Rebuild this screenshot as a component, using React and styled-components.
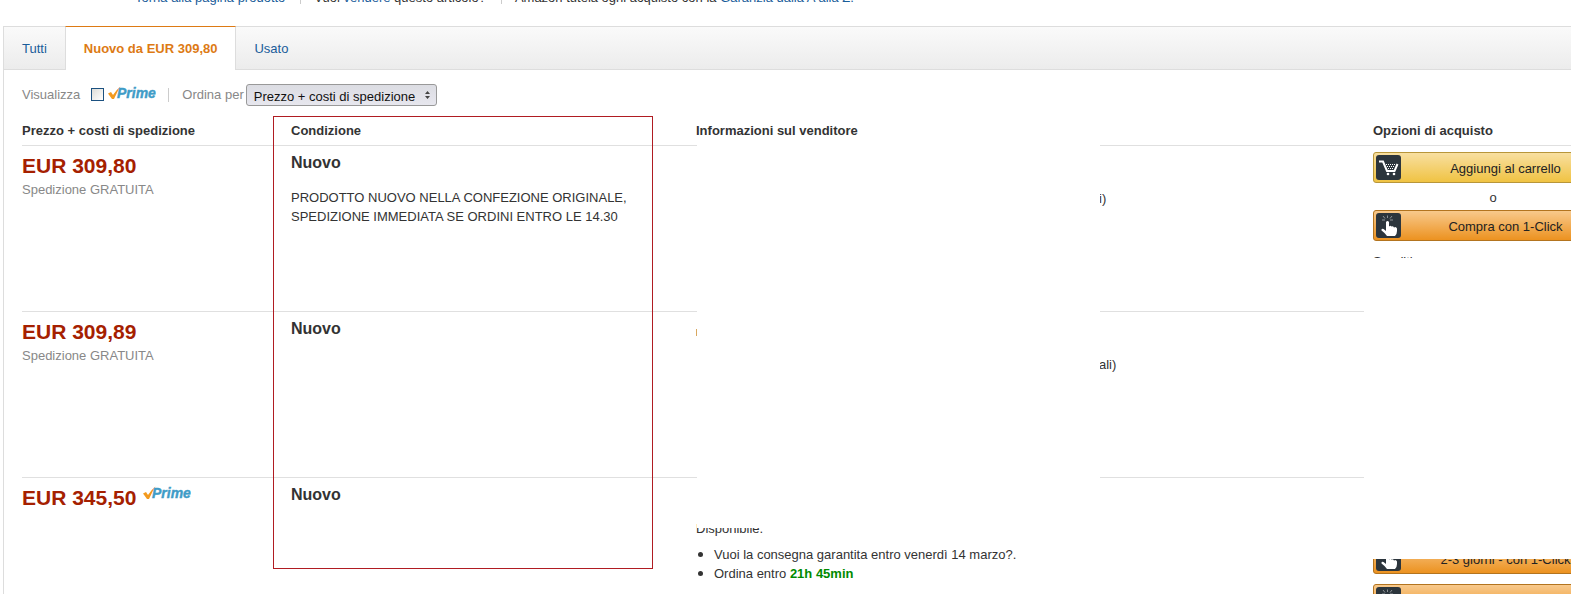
import React from 'react';
import styled, { createGlobalStyle } from 'styled-components';

const Global = createGlobalStyle`
  * { box-sizing: border-box; }
  html, body { margin: 0; padding: 0; background: #fff; }
  body {
    font: 13px/19px "Liberation Sans", Arial, sans-serif;
    color: #333;
  }
  ul { margin: 0; padding: 0; }
`;

const Page = styled.div`
  height: 100vh;
  overflow: hidden;
  display: flex;
  flex-direction: column;
`;
const Link = styled.a`
  color: #1a5d9a;
  text-decoration: none;
`;
const TopBar = styled.nav`
  flex: none;
  height: 26px;
  margin-top: -12px;
  margin-bottom: 12px;
  padding-left: 135px;
  display: flex;
  align-items: flex-start;
  white-space: nowrap;
`;
const TopItem = styled.span`
  & + & {
    border-left: 1px solid #ccc;
    height: 16px;
    margin-left: 15px;
    padding-left: 13px;
  }
`;
const Panel = styled.main`
  flex: 1;
  margin-left: 3px;
  border-left: 1px solid #ddd;
  min-width: 0;
`;
const Tabs = styled.div`
  display: flex;
  height: 44px;
  border-top: 1px solid #ddd;
  border-bottom: 1px solid #ddd;
  background: linear-gradient(#fafafa, #ececec);
`;
const Tab = styled.a`
  display: block;
  height: 44px;
  margin-top: -1px;
  padding: ${p => (p.$active ? 12 : 13)}px 18px 0;
  white-space: nowrap;
  text-decoration: none;
  color: ${p => (p.$active ? '#dd7a14' : '#1a5d9a')};
  font-weight: ${p => (p.$active ? 'bold' : 'normal')};
  background: ${p => (p.$active ? '#fff' : 'none')};
  border: solid #ddd;
  border-width: ${p => (p.$active ? '1px 1px 0' : '0')};
  border-top-color: #dd7a14;
`;
const Filters = styled.form`
  display: flex;
  align-items: center;
  height: 49px;
  padding-left: 18px;
  color: #888;
`;
const PrimeOption = styled.label`
  display: flex;
  align-items: center;
`;
const Check = styled.input`
  appearance: none;
  width: 13px;
  height: 13px;
  margin: 0 4px 0 11px;
  border: 1px solid #1c5180;
  background: linear-gradient(135deg, #dcdcd7, #fff);
`;
const PrimeLogo = styled.svg`
  flex: none;
  width: 48px;
  height: 16px;
  margin-bottom: 2px;
`;
const Divider = styled.span`
  width: 1px;
  height: 14px;
  margin: 0 13px 0 12px;
  background: #ccc;
`;
const SortLabel = styled.label`
  margin-right: 2px;
`;
const SelectWrap = styled.span`
  display: flex;
  align-items: center;
  margin-top: 1px;
`;
const SortSelect = styled.select`
  appearance: none;
  width: 191px;
  height: 22px;
  padding: 2px 7px 0;
  border: 1px solid #999;
  border-radius: 3px;
  background: linear-gradient(#dcdde3, #e7e7ee);
  color: #111;
  font: 13px "Liberation Sans", Arial, sans-serif;
`;
const SelectArrows = styled.svg`
  width: 5px;
  height: 8px;
  margin-left: -12px;
  pointer-events: none;
`;
const Offers = styled.div`
  position: relative;
  margin: 0 -42px 0 18px;
`;
const OfferTable = styled.table`
  width: 100%;
  table-layout: fixed;
  border-collapse: collapse;
`;
const Col = styled.col`
  width: ${p => p.$w}px;
`;
const HeadCell = styled.th`
  height: 26px;
  padding: 2px 0 4px;
  text-align: left;
  vertical-align: top;
  border-bottom: 1px solid #e0e0e0;
`;
const Row = styled.tr`
  height: 166px;
  border-bottom: 1px solid #e0e0e0;
`;
const Cell = styled.td`
  padding: 6px 0 0;
  vertical-align: top;
`;
const Price = styled.div`
  display: flex;
  gap: 7px;
  color: #a52000;
  font-size: 21px;
  font-weight: bold;
  line-height: 28px;

  ${PrimeLogo} {
    margin-top: 2px;
  }
`;
const Shipping = styled.div`
  color: #888;
`;
const Condition = styled.h3`
  margin: 0;
  padding-top: 1px;
  font-size: 16px;
  line-height: 20px;
`;
const Note = styled.p`
  margin: 15px 0 0;
  max-width: 360px;
`;
const Rating = styled.div`
  padding: 37px 0 0 403px;
`;
const StarRating = styled(Rating)`
  background: linear-gradient(#d9a860, #d9a860) 0 11px / 1px 7px no-repeat;
`;
const Stock = styled.div`
  padding-top: 35px;
`;
const Delivery = styled.ul`
  padding: 6px 0 0 18px;

  li {
    height: 19px;
  }

  li::marker {
    font-size: 16px;
  }
`;
const Deadline = styled.strong`
  color: #008a00;
`;
const Buy = styled.div`
  display: flex;
  flex-direction: column;
  gap: ${p => p.$gap || 0}px;
  text-align: center;
  padding-top: ${p => p.$top || 0}px;
`;
const BuyButton = styled.button`
  display: flex;
  align-items: center;
  width: 100%;
  height: 31px;
  padding: 0 2px;
  border: 1px solid ${p => (p.$orange ? '#b3741f' : '#b8963a')};
  border-radius: 3px;
  background: ${p => (p.$orange ? 'linear-gradient(#f8c98c, #ec9220)' : 'linear-gradient(#f8dfa0, #f0c343)')};
  color: #222;
  font: 13px "Liberation Sans", Arial, sans-serif;
`;
const ButtonText = styled.span`
  flex: 1;
  padding-top: 2px;
`;
const Or = styled.span`
  height: 27px;
  line-height: 29px;
`;
const Terms = styled.span`
  padding-top: 11px;
  text-align: left;
`;
const Cover = styled.div`
  position: absolute;
  background: #fff;
  left: ${p => p.$left};
  right: ${p => p.$right};
  top: ${p => p.$top}px;
  height: ${p => p.$height}px;
  width: ${p => p.$width};
`;
const Highlight = styled.div`
  position: absolute;
  left: 251px;
  top: -3px;
  width: 380px;
  height: 453px;
  border: 1px solid #b01c22;
  pointer-events: none;
`;

const Prime = () => (
  <PrimeLogo viewBox="0 0 48 16" role="img" aria-label="Prime">
    <path d="M0 7.500 L3 6 L5 9 Q8 4 12.500 0.500 Q9 6 6 13 H4 Z" fill="#f39a1f" />
    <text x="9" y="12" fontFamily="Liberation Sans" fontSize="14" fontWeight="bold" fontStyle="italic" fill="#3f9cc7" stroke="#3f9cc7" strokeWidth="0.400">Prime</text>
  </PrimeLogo>
);

const CartIcon = () => (
  <svg width="25" height="25" viewBox="0 0 25 25" aria-hidden="true">
    <rect width="25" height="25" rx="3" fill="#2c353c" />
    <path d="M3 6.500 H7 L11 16 H18.500 L21.500 9" fill="none" stroke="#fff" strokeWidth="2" />
    <path d="M10 9.500 H20 M11 11.500 H19 M12 13.500 H18" stroke="#fff" strokeWidth="1" strokeDasharray="1 1" />
    <circle cx="12" cy="19" r="1.300" fill="#fff" />
    <circle cx="18" cy="19" r="1.300" fill="#fff" />
  </svg>
);

const HandIcon = () => (
  <svg width="25" height="25" viewBox="0 0 25 25" aria-hidden="true">
    <rect width="25" height="25" rx="3" fill="#2c353c" />
    <path d="M6 7 H9 M7 3 L9 5.500 M11.500 2.500 V5 M16 3 L14 5.500 M14 7 H17" stroke="#8d9296" strokeWidth="1" />
    <path d="M10 9 Q11.500 7 13 9 V13.500 Q14.500 12 15.500 13.500 Q17 12.500 18 14.500 Q20 13 21 15.500 V18 Q21 21 19 23 H11 Q9 20 5.500 17.500 Q5 15 7.500 16 L10 18 Z" fill="#fff" />
  </svg>
);

const Action = ({ children, orange }) => (
  <BuyButton type="button" $orange={orange}>
    {orange ? <HandIcon /> : <CartIcon />}
    <ButtonText>{children}</ButtonText>
  </BuyButton>
);

export default function App() {
  return (
    <Page>
      <Global />
      <TopBar>
        <TopItem><Link href="#prodotto">Torna alla pagina prodotto</Link></TopItem>
        <TopItem>Vuoi <Link href="#vendere">vendere</Link> questo articolo?</TopItem>
        <TopItem>Amazon tutela ogni acquisto con la <Link href="#garanzia">Garanzia dalla A alla Z.</Link></TopItem>
      </TopBar>
      <Panel>
        <Tabs>
          <Tab href="#tutti">Tutti</Tab>
          <Tab href="#nuovo" $active>Nuovo da EUR 309,80</Tab>
          <Tab href="#usato">Usato</Tab>
        </Tabs>
        <Filters>
          <span>Visualizza</span>
          <PrimeOption><Check type="checkbox" /><Prime /></PrimeOption>
          <Divider />
          <SortLabel htmlFor="ordina">Ordina per</SortLabel>
          <SelectWrap>
            <SortSelect id="ordina"><option>Prezzo + costi di spedizione</option></SortSelect>
            <SelectArrows viewBox="0 0 5 8" aria-hidden="true"><path d="M0 3 L2.500 0 L5 3 Z M0 5 L2.500 8 L5 5 Z" fill="#444" /></SelectArrows>
          </SelectWrap>
        </Filters>
        <Offers>
          <OfferTable>
            <colgroup><Col $w={269} /><Col $w={405} /><col /><Col $w={240} /></colgroup>
            <thead>
              <tr>
                <HeadCell>Prezzo + costi di spedizione</HeadCell>
                <HeadCell>Condizione</HeadCell>
                <HeadCell>Informazioni sul venditore</HeadCell>
                <HeadCell>Opzioni di acquisto</HeadCell>
              </tr>
            </thead>
            <tbody>
              <Row>
                <Cell><Price>EUR 309,80</Price><Shipping>Spedizione GRATUITA</Shipping></Cell>
                <Cell>
                  <Condition>Nuovo</Condition>
                  <Note>PRODOTTO NUOVO NELLA CONFEZIONE ORIGINALE, SPEDIZIONE IMMEDIATA SE ORDINI ENTRO LE 14.30</Note>
                </Cell>
                <Cell><Rating>i)</Rating></Cell>
                <Cell>
                  <Buy>
                    <Action>Aggiungi al carrello</Action>
                    <Or>o</Or>
                    <Action orange>Compra con 1-Click</Action>
                    <Terms>Spediti</Terms>
                  </Buy>
                </Cell>
              </Row>
              <Row>
                <Cell><Price>EUR 309,89</Price><Shipping>Spedizione GRATUITA</Shipping></Cell>
                <Cell><Condition>Nuovo</Condition></Cell>
                <Cell><StarRating>ali)</StarRating></Cell>
                <Cell />
              </Row>
              <Row>
                <Cell><Price>EUR 345,50 <Prime /></Price></Cell>
                <Cell><Condition>Nuovo</Condition></Cell>
                <Cell>
                  <Stock>Disponibile.</Stock>
                  <Delivery>
                    <li>Vuoi la consegna garantita entro venerdì 14 marzo?.</li>
                    <li>Ordina entro <Deadline>21h 45min</Deadline></li>
                  </Delivery>
                </Cell>
                <Cell>
                  <Buy $top={59} $gap={10}>
                    <Action orange>2-3 giorni - con 1-Click</Action>
                    <Action orange>1 giorno - con 1-Click</Action>
                  </Buy>
                </Cell>
              </Row>
            </tbody>
          </OfferTable>
          <Cover $left="675px" $width="403px" $top={26} $height={383} />
          <Cover $right="0" $width="249px" $top={139} $height={301} />
          <Highlight />
        </Offers>
      </Panel>
    </Page>
  );
}
